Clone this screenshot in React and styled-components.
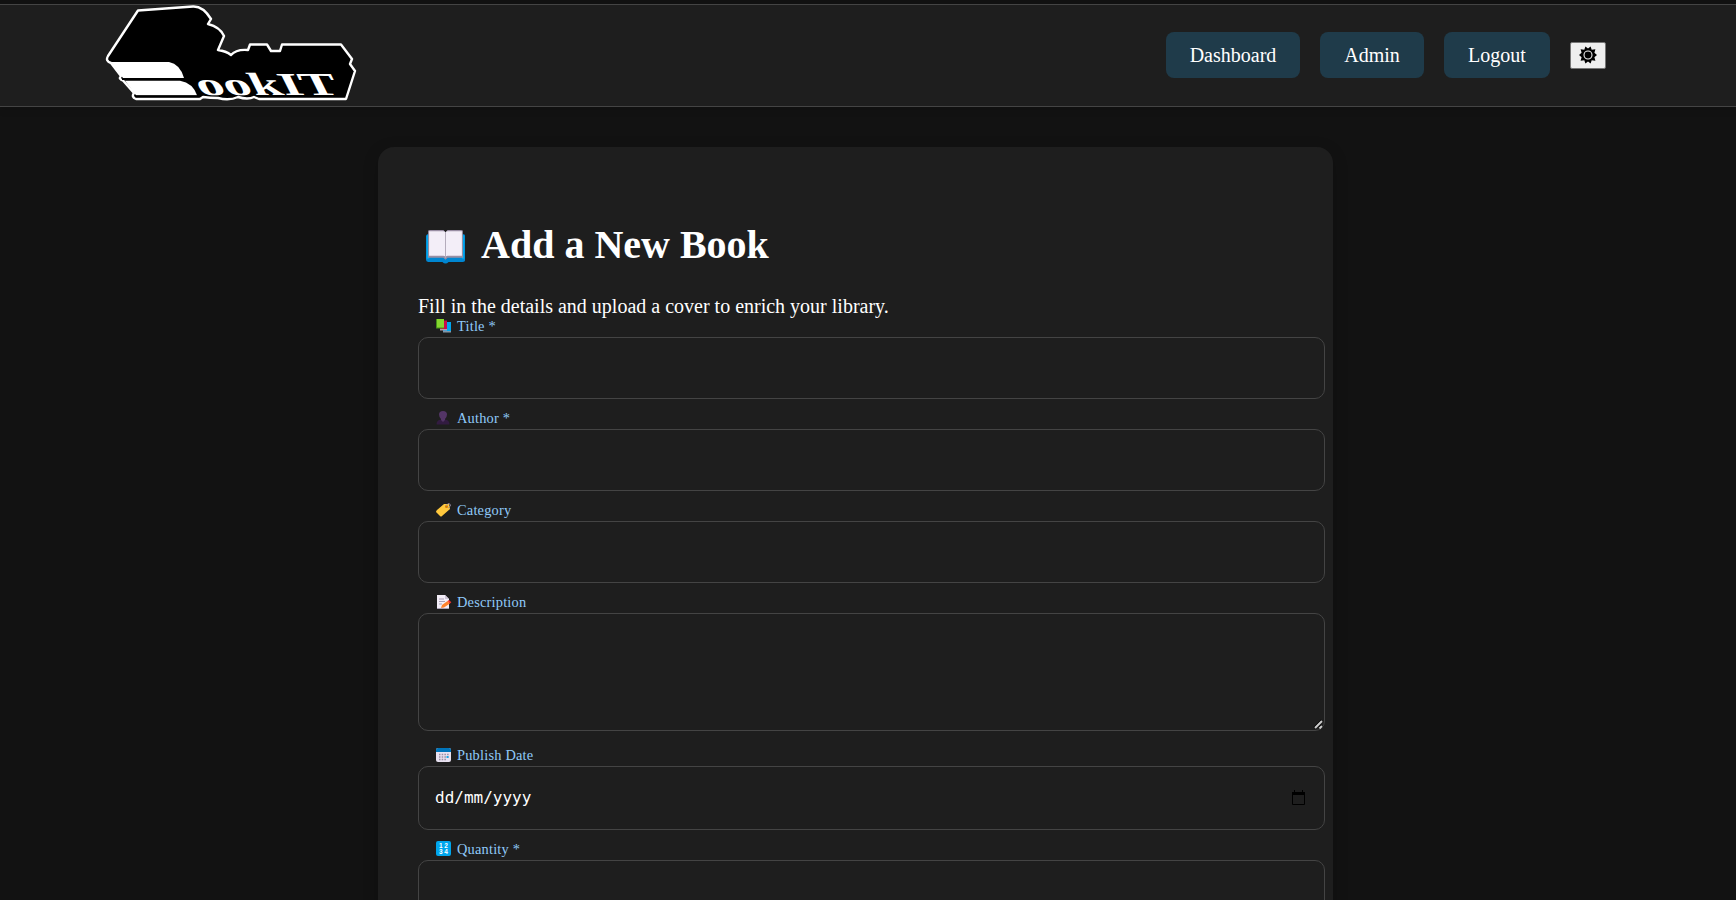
import React from "react";
import styled, { createGlobalStyle } from "styled-components";

const GlobalStyle = createGlobalStyle`
  * { box-sizing: border-box; }
  html, body { margin: 0; height: 100%; overflow: hidden; }
  body {
    background: #121212;
    color: #fff;
    font-family: "Liberation Serif", "Times New Roman", serif;
    font-size: 20px;
  }
`;

const Page = styled.div`
  height: 900px;
  overflow: hidden;
  padding-top: 4px;
`;

const Header = styled.header`
  display: flex;
  align-items: center;
  justify-content: space-between;
  height: 103px;
  padding: 0 130px 0 105px;
  background: #1e1e1e;
  border-top: 1px solid #444;
  border-bottom: 1px solid #444;
  box-shadow: 0 2px 8px rgba(0, 0, 0, 0.15);
`;

const LogoArt = styled.svg`
  display: block;
  width: 252px;
  height: 101px;
`;

const Nav = styled.nav`
  display: flex;
  align-items: center;
  gap: 20px;
  padding-bottom: 2px;
`;

const NavLink = styled.a`
  display: block;
  width: ${(p) => p.$width}px;
  height: 46px;
  line-height: 47px;
  border-radius: 8px;
  background: #1f3b4a;
  text-align: center;
  font-size: 20px;
`;

const ThemeToggle = styled.button`
  display: flex;
  align-items: center;
  justify-content: center;
  width: 36px;
  height: 27px;
  margin-top: 1px;
  padding: 0 0 1px;
  background: #efefef;
  border: 1px solid #767676;
  border-radius: 2px;
`;

const Card = styled.main`
  width: 955px;
  height: 900px;
  margin: 40px 0 0 378px;
  padding: 75px 8px 0 40px;
  background: #1e1e1e;
  border-radius: 16px;
  box-shadow: 0 4px 16px rgba(0, 0, 0, 0.18);
`;

const Heading = styled.h1`
  display: flex;
  align-items: center;
  gap: 15px;
  height: 46px;
  margin: 0;
  padding-left: 7px;
  font-size: 40px;
  line-height: 46px;

  svg { margin-top: 2px; }
`;

const Intro = styled.p`
  height: 23px;
  margin: 27px 0 0;
  font-size: 20px;
  line-height: 23px;
  white-space: nowrap;
`;

const Form = styled.form`
  display: flex;
  flex-direction: column;
`;

const Field = styled.div`
  margin-bottom: ${(p) => p.$gap ?? 11}px;
`;

const Label = styled.label`
  display: flex;
  align-items: center;
  gap: 5px;
  height: 19px;
  padding: 0 0 3px 18px;
  color: #90caf9;
  font-size: 14.4px;
  letter-spacing: 0.2px;
  line-height: 16px;
`;

const control = `
  display: block;
  width: 907px;
  border: 1px solid #444;
  border-radius: 10px;
  background: #1e1e1e;
  color: #fff;
  outline: none;
`;

const Input = styled.input`
  ${control}
  height: 62px;
`;

const TextArea = styled.textarea`
  ${control}
  height: 118px;
  resize: none;
`;

const TextAreaWrap = styled.div`
  position: relative;
`;

const Grip = styled.svg`
  position: absolute;
  right: 1px;
  bottom: 1px;
`;

const DateBox = styled.div`
  ${control}
  display: flex;
  align-items: center;
  justify-content: space-between;
  height: 64px;
  padding: 0 18px 1px 16px;
  font-family: "DejaVu Sans Mono", monospace;
  font-size: 16px;
`;

const Logo = () => (
  <LogoArt viewBox="105 5 252 101" role="img" aria-label="BookIT">
    <path
      d="M138 10.5 L193 6.5 Q203 6 211 19 L208 24 Q220 27 224 36 L218 50 Q226 51 231 55 Q236 49 248 50 L250 44.5 H267 L271 51 H280 L282 44.5 H341 L352 59 L350 64 L355 71 L346 99 H259 L254 97 Q248 100 238 97 Q229 101 218 98 Q210 98 203 97 L200 99 H136 Q131 97 134 93 L123 80.5 Q118 79 121 76 L111 63 Q105 61 108 56 Z"
      fill="#000" stroke="#fff" strokeWidth="2.4" strokeLinejoin="round"
    />
    <path d="M111 62 H169 Q180 64 184 78 H123 Z" fill="#fff" />
    <path d="M125 80.7 H180 Q193 83 197 95.3 H136 Z" fill="#fff" />
    <path d="M122 79.3 H184 M135 96.4 H199" stroke="#000" strokeWidth="1.6" fill="none" />
    <text
      transform="matrix(1 0 .5 1 201 95)"
      fontFamily="Liberation Serif" fontWeight="700" fontSize="32"
      textLength="141" lengthAdjust="spacingAndGlyphs" fill="#fff"
    >ookIT</text>
  </LogoArt>
);

const Gear = () => (
  <svg width="18" height="18" viewBox="0 0 18 18">
    <path d="M9 2.6 L11.6 .4 L12.7 3.8 L16.4 3.3 L15.4 6.8 L18 9 L15.4 11.2 L16.4 14.7 L12.7 14.2 L11.6 17.6 L9 15.4 L6.4 17.6 L5.3 14.2 L1.6 14.7 L2.6 11.2 L0 9 L2.6 6.8 L1.6 3.3 L5.3 3.8 L6.4 .4Z" fill="#000" />
    <circle cx="9" cy="9" r="4" fill="none" stroke="#efefef" strokeWidth="1.1" />
  </svg>
);

const OpenBook = () => (
  <svg width="41" height="35" viewBox="0 0 40 34">
    <path d="M2 5 H38 Q39 5 39 7 V31 Q39 32 37 32 H23 Q20 35 17 32 H3 Q1 32 1 30 V7Z" fill="#0086d1" />
    <path d="M1.5 6 H4 V29 H1.5Z M36 6 H38.5 V29 H36Z" fill="#00a6ed" />
    <path d="M3 2 Q3 1 5 1 H18 L20 3 L22 1 H35 Q37 1 37 2 V28 H22 L20 30 L18 28 H3Z" fill="#998ea4" />
    <path d="M4 2 H18 Q20 2 20 4 Q20 2 22 2 H36 V26 H22 Q20 26 20 28 Q20 26 18 26 H4Z" fill="#f3eef8" />
    <path d="M20 3 V28" stroke="#b4acbc" />
  </svg>
);

const glyphs = {
  books: (
    <>
      <path d="M7 4 H15 V14 H7Z" fill="#00a6ed" /><path d="M7 13 H15 V14.5 H7Z" fill="#8298ab" />
      <path d="M4 2.5 H11 V12 H4Z" fill="#ca0b4a" /><path d="M4 11 H11 V12.5 H4Z" fill="#b899a6" />
      <path d="M0 1 H8 V10 H0Z" fill="#86d72f" /><path d="M0 1 H1 V10 H0Z M0 9.5 H8 V10.5 H0Z" fill="#44911b" />
    </>
  ),
  author: (
    <>
      <path d="M.5 14.5 Q.5 10 5 9.5 H9 Q13.5 10 13.5 14.5Z" fill="#321b41" />
      <path d="M3 4.5 Q3 1 7 1 Q11 1 11 4.5 Q11 7 9 9 V10 L7 12 L5 10 V9 Q3 7 3 4.5Z" fill="#533566" />
    </>
  ),
  tag: (
    <>
      <path d="M8 2 L13 2 L14 7 L6 14 Q5 15 4 14 L0 10 Q0 9 1 8Z" fill="#ffc83d" />
      <circle cx="10.5" cy="4.5" r="1.5" fill="#d67d00" />
      <path d="M10 4 Q12 0 14 2 Q16 4 12 6" fill="none" stroke="#998ea4" strokeWidth=".8" />
    </>
  ),
  memo: (
    <>
      <path d="M1 1 H9 L13 5 V15 H1Z" fill="#f3eef8" /><path d="M9 1 V5 H13Z" fill="#cdc4d6" />
      <path d="M3 5 H8 M3 7.5 H9 M3 10 H6 M1 14.5 H13" stroke="#aaa0b5" />
      <path d="M5 14 L6 11 L11.5 7 L14 9.5 L8 13.5Z" fill="#ff822d" />
      <path d="M11.5 7 L13 6 L15.3 8.3 L14 9.5Z" fill="#f8312f" />
    </>
  ),
  calendar: (
    <>
      <rect y="1" width="15" height="14" rx="2" fill="#e8e1f0" /><path d="M0 5 V2.5 Q0 1 2 1 H13 Q15 1 15 2.5 V5Z" fill="#0074ba" />
      <path d="M3 7.5 H13 M3 10 H13 M3 12.5 H10" stroke="#998ea4" strokeWidth="1.5" strokeDasharray="1.5 1.2" />
      <path d="M10.5 10 H12.5" stroke="#00a6ed" strokeWidth="1.7" />
    </>
  ),
  numbers: (
    <>
      <rect y="0" width="15" height="15" rx="2" fill="#00a6ed" />
      <g fill="#fff" fontFamily="Liberation Sans" fontWeight="700" fontSize="6.5">
        <text x="3" y="7">1</text><text x="8.3" y="7">2</text><text x="3" y="13">3</text><text x="8.3" y="13">4</text>
      </g>
    </>
  ),
};

const Glyph = ({ name }) => (
  <svg width="16" height="16" viewBox="0 0 16 16">{glyphs[name]}</svg>
);

const CalendarButton = () => (
  <svg width="14" height="16" viewBox="0 0 14 16">
    <path d="M.5 2.5 H12.5 V14.5 H.5Z" fill="none" stroke="#000" />
    <path d="M0 2 H13 V5 H0Z M2 0 H3 V2 H2Z M10 0 H11 V2 H10Z" fill="#000" />
  </svg>
);

const FieldLabel = ({ icon, children }) => (
  <Label><Glyph name={icon} />{children}</Label>
);

export default function App() {
  return (
    <Page>
      <GlobalStyle />
      <Header>
        <Logo />
        <Nav>
          <NavLink $width={134}>Dashboard</NavLink>
          <NavLink $width={104}>Admin</NavLink>
          <NavLink $width={106}>Logout</NavLink>
          <ThemeToggle aria-label="Toggle theme"><Gear /></ThemeToggle>
        </Nav>
      </Header>
      <Card>
        <Heading><OpenBook />Add a New Book</Heading>
        <Intro>Fill in the details and upload a cover to enrich your library.</Intro>
        <Form>
          <Field><FieldLabel icon="books">Title *</FieldLabel><Input /></Field>
          <Field><FieldLabel icon="author">Author *</FieldLabel><Input /></Field>
          <Field><FieldLabel icon="tag">Category</FieldLabel><Input /></Field>
          <Field $gap={16}>
            <FieldLabel icon="memo">Description</FieldLabel>
            <TextAreaWrap>
              <TextArea />
              <Grip width="11" height="11" viewBox="0 0 11 11">
                <path d="M1.5 9 L9 1.5 M6.5 9 L9 6.5" stroke="#000" strokeWidth="3" />
                <path d="M2 9 L9 2 M6.5 9.5 L9 7" stroke="#ccc" strokeWidth="2" />
              </Grip>
            </TextAreaWrap>
          </Field>
          <Field>
            <FieldLabel icon="calendar">Publish Date</FieldLabel>
            <DateBox><span>dd/mm/yyyy</span><CalendarButton /></DateBox>
          </Field>
          <Field><FieldLabel icon="numbers">Quantity *</FieldLabel><Input /></Field>
        </Form>
      </Card>
    </Page>
  );
}
